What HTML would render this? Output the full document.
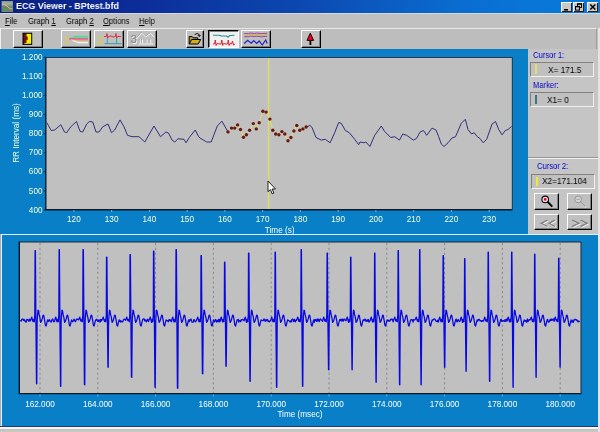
<!DOCTYPE html>
<html><head><meta charset="utf-8"><title>ECG Viewer - BPtest.bfd</title>
<style>
html,body{margin:0;padding:0;}
body{width:600px;height:432px;overflow:hidden;background:#c0c0c0;font-family:"Liberation Sans",sans-serif;font-size:8px;position:relative;}
.abs{position:absolute;}
#title .cap,#menu span,.lab,.box span{will-change:transform}
#title{left:0;top:0;width:600px;height:12.7px;background:linear-gradient(90deg,#0a2080 0%,#0c2c98 22%,#0c48b0 50%,#0a6cd0 76%,#0878d8 92%,#0878d8 100%);}
#title .cap{left:16px;top:1px;color:#fff;font-weight:bold;font-size:9.3px;line-height:11px;white-space:nowrap;transform:scaleX(0.96);transform-origin:0 0}
.tb{top:1.5px;width:11px;height:10px;background:#c8c8c8;box-shadow:inset 1px 1px 0 #fff,inset -1px -1px 0 #202020;}
#menu{left:0;top:13px;width:600px;height:15px;background:#c0c0c0;border-top:1px solid #d8d8d8;box-sizing:border-box}
#menu span{position:absolute;top:1.6px;color:#000;font-size:8.8px;line-height:10px;white-space:nowrap;transform:scaleX(0.87);transform-origin:0 0}
#menu u{text-decoration:underline;text-underline-offset:1px}
#tool{left:0;top:28.4px;width:597px;height:21.1px;background:#bdbdbd;border-top:1px solid #e8e8e8;border-right:1px solid #a0a0a0;border-left:1px solid #f0f0f0;box-sizing:border-box}
.btn{top:30px;height:17.8px;will-change:transform;background:#c0c0c0;box-sizing:border-box;border:1px solid;border-color:#fff #000 #000 #fff;box-shadow:inset -1px -1px 0 #808080;}
.btn.down{border-color:#000 #fff #fff #000;background:#f0f0f0;box-shadow:inset 1px 1px 0 #808080;}
#top{left:0;top:49px;width:600px;height:185px;background:#087fc6;}
#bottom{left:0;top:234px;width:598.3px;height:192px;background:#087fc6;box-sizing:border-box;border-left:1px solid #a4b0bc;box-shadow:inset 1px 1px 0 #e4f2ff}
#side{left:528px;top:49px;width:72px;height:185px;background:#c5c5c5;}
.lab{color:#0000d0;font-size:8.8px;line-height:10px;white-space:nowrap;transform:scaleX(0.865);transform-origin:0 0}
.box{background:#c0c0c0;box-sizing:border-box;border:1px solid;border-color:#808080 #f0f0f0 #f0f0f0 #808080;color:#000;font-size:9px;line-height:12.5px;padding-top:0.9px;white-space:nowrap}
.box span{display:inline-block;transform:scaleX(0.92);transform-origin:0 0}
.sbtn{background:#c0c0c0;box-sizing:border-box;border:1px solid;border-color:#fff #000 #000 #fff;box-shadow:inset -1px -1px 0 #808080;}
svg{position:absolute;left:0;top:0;overflow:visible}
svg text{font-family:"Liberation Sans",sans-serif;}
</style></head><body>

<div id="title" class="abs">
<svg width="14" height="13" viewBox="0 0 14 13"><rect x="1.5" y="1" width="11.5" height="11" fill="#708898"/><rect x="2" y="1.5" width="10.5" height="4" fill="#a0a890"/><rect x="2" y="7" width="10.5" height="4.5" fill="#589060"/><path d="M2 4 L6 5 L9 8 L12.5 9" stroke="#d0c080" stroke-width="1" fill="none"/><path d="M2 7 L5 6.5 L8 9.5 L12.5 10.5" stroke="#c06050" stroke-width="0.8" fill="none"/></svg>
<div class="abs cap">ECG Viewer - BPtest.bfd</div>
<div class="abs tb" style="left:561px"><svg width="11" height="10"><rect x="3" y="7" width="4" height="1.6" fill="#000"/></svg></div>
<div class="abs tb" style="left:573px"><svg width="11" height="10"><rect x="4.5" y="1.8" width="4" height="3.6" fill="none" stroke="#000" stroke-width="1"/><rect x="4" y="1.5" width="5" height="1.2" fill="#000"/><rect x="2.5" y="4.5" width="4" height="3.6" fill="#c8c8c8" stroke="#000" stroke-width="1"/><rect x="2" y="4" width="5" height="1.3" fill="#000"/></svg></div>
<div class="abs tb" style="left:586.7px;width:11.8px"><svg width="12" height="10"><path d="M3.3 2.5 L8.3 7.5 M8.3 2.5 L3.3 7.5" stroke="#000" stroke-width="1.5"/></svg></div>
</div>
<div id="menu" class="abs">
<span style="left:5px"><u>F</u>ile</span>
<span style="left:28px">Graph <u>1</u></span>
<span style="left:65.5px">Graph <u>2</u></span>
<span style="left:103px"><u>O</u>ptions</span>
<span style="left:139px"><u>H</u>elp</span>
</div>
<div id="tool" class="abs"></div>
<div class="abs btn" style="left:12.5px;width:29.5px"><svg width="27.5" height="15" viewBox="13.5 31 27.5 15"><rect x="22" y="32.7" width="9.7" height="12.2" fill="#000"/><rect x="23" y="33.8" width="3.2" height="10" fill="#701010"/><rect x="26" y="33.8" width="4.7" height="10" fill="#f8f000"/><rect x="25.5" y="36.6" width="1.7" height="3.2" fill="#701010"/><rect x="24" y="43" width="3" height="0.9" fill="#f8f000"/></svg></div>
<div class="abs btn" style="left:61.3px;width:30px"><svg width="28" height="15" viewBox="62.3 31 28 15"><text x="63.8" y="43.8" font-size="11.5" fill="#d8d040">1</text><path d="M70 38.4 L76.5 36.3 L88.3 36.3" stroke="#48e060" stroke-width="1" fill="none"/><path d="M72 38.3 L77 37.4 L88.3 37.4" stroke="#50d0d8" stroke-width="0.8" fill="none"/><path d="M69.5 38.7 L88.3 38.7" stroke="#f06048" stroke-width="1.1" fill="none"/><path d="M69.5 39.3 L75 39.9 L88.3 39.9" stroke="#e058e0" stroke-width="1" fill="none"/><path d="M71 39.6 L77 41.2 L88.3 41.2" stroke="#e0d860" stroke-width="1" fill="none"/><path d="M73 40.4 L78.5 42.6 L88.3 42.6" stroke="#f4f4f4" stroke-width="1.1" fill="none"/></svg></div>
<div class="abs btn" style="left:94px;width:30px"><svg width="28" height="15" viewBox="95 31 28 15"><text x="96.8" y="43.6" font-size="11.8" fill="#d8cc38">2</text><path d="M104 36.5 L106.3 36.5 L107 33.5 L107.7 38 L108.5 36.5 L111 36 L113 37 L115.3 36.5 L116 33.5 L116.7 38 L117.5 36.5 L121 36.5" stroke="#e03040" stroke-width="1" fill="none"/><path d="M107.3 38 V43.7 M116.6 38 V43.7 M104.5 43.7 H121.5" stroke="#30a0a8" stroke-width="1" fill="none"/></svg></div>
<div class="abs btn" style="left:126.7px;width:30px"><svg width="28" height="15" viewBox="127.7 31 28 15"><text x="131.1" y="43.9" font-size="10.8" fill="#fff">3</text><text x="130.4" y="43.2" font-size="10.8" fill="#888" stroke="#808080" stroke-width="0.2">3</text><path d="M136.3 39 L141.4 33.1 L145.3 37 L150.4 33.4 L153.4 37 M139.9 39.5 V43.5 M142.2 39.5 V43.5 M146.7 39.5 V43.5 M150.4 39.5 V43.5 M138 43.9 H153" stroke="#a0a0a0" stroke-width="1" fill="none" transform="translate(-0.5,-0.5)"/><path d="M136.3 39 L141.4 33.1 L145.3 37 L150.4 33.4 L153.4 37 M139.9 39.5 V43.5 M142.2 39.5 V43.5 M146.7 39.5 V43.5 M150.4 39.5 V43.5 M138 43.9 H153" stroke="#fff" stroke-width="0.9" fill="none"/></svg></div>
<div class="abs btn" style="left:186.3px;width:17.5px"><svg width="15.5" height="15" viewBox="187.3 31 15.5 15"><path d="M189.5 44 V36.5 H192.5 L193.5 37.8 H198 V39.5" fill="#b89818" stroke="#000" stroke-width="1"/><path d="M189.5 44 L192 39.5 H201 L198.5 44 Z" fill="#d0b020" stroke="#000" stroke-width="1"/><path d="M195 34.5 Q197.5 32.5 199.5 34.5 L199.5 36 M198.3 35.2 L199.6 36.6 L200.8 35" stroke="#000" stroke-width="0.9" fill="none"/></svg></div>
<div class="abs btn down" style="left:207.5px;width:30.5px"><svg width="28.5" height="15" viewBox="208.5 31 28.5 15"><path d="M212.5 35.2 L219 35.2 L220.5 36 L226 36 L227.5 37 L229.5 35.5 L234 35.2" stroke="#209090" stroke-width="1.1" fill="none"/><path d="M212.5 44 L214 44 L214.8 40 L215.6 45.5 L216.5 43.5 L219 44 L220.5 44 L221.3 40 L222.1 45.5 L223 43.5 L225.5 44 L227 44 L227.8 40 L228.6 45.5 L229.5 43.5 L231 44 L232 41 L233 45 L234.5 44" stroke="#e02030" stroke-width="1" fill="none"/></svg></div>
<div class="abs btn" style="left:241.3px;width:30px"><svg width="28" height="15" viewBox="242.3 31 28 15"><path d="M244.5 33.6 L249 33.6 L250.5 33 L255 33.5 L257 33.1 L262 33.6 L267.5 33.2" stroke="#9030a0" stroke-width="0.85" fill="none"/><path d="M244.5 35.1 L249 35.1 L250.5 34.5 L255 35 L257 34.6 L262 35.2 L267.5 34.7" stroke="#e8a828" stroke-width="0.9" fill="none"/><path d="M244.5 36.7 L249 36.7 L250.5 36.1 L255 36.6 L257 36.2 L262 36.8 L267.5 36.3" stroke="#9030a0" stroke-width="0.85" fill="none"/><path d="M244.5 43.5 L248 40.3 L251.5 43.2 L254 40.5 L257 43.5 L259.5 41 L262.5 45 L266 40 L267.5 43.5" stroke="#2020c0" stroke-width="1.2" fill="none"/></svg></div>
<div class="abs btn" style="left:300.8px;width:19.5px"><svg width="17.5" height="15" viewBox="301.8 31 17.5 15"><rect x="309.3" y="39" width="1.8" height="6" fill="#000"/><path d="M310.1 33.2 L313.4 40.4 L306.8 40.4 Z" fill="#f00020" stroke="#200000" stroke-width="1" stroke-linejoin="round"/></svg></div>
<div id="top" class="abs"></div>
<div id="side" class="abs"></div>
<div class="abs lab" style="left:532.8px;top:49.6px">Cursor 1:</div>
<div class="abs box" style="left:530px;top:62px;width:64px;height:15.4px;padding-left:17px"><span>X= 171.5</span></div>
<div class="abs" style="left:534.8px;top:64.4px;width:2.4px;height:9.8px;background:#e2de70"></div>
<div class="abs lab" style="left:532.8px;top:79.6px">Marker:</div>
<div class="abs box" style="left:530px;top:91.8px;width:64px;height:15.4px;padding-left:16px"><span>X1= 0</span></div>
<div class="abs" style="left:535.2px;top:94.5px;width:1.7px;height:9.6px;background:#407484"></div>
<div class="abs" style="left:528px;top:157.5px;width:72px;height:1px;background:#f0f0f0"></div>
<div class="abs" style="left:528px;top:156.5px;width:72px;height:1px;background:#989898"></div>
<div class="abs lab" style="left:537px;top:160.5px">Cursor 2:</div>
<div class="abs box" style="left:531px;top:173.5px;width:63.5px;height:15px;padding-left:10px"><span>X2=171.104</span></div>
<div class="abs" style="left:535.5px;top:176.5px;width:2px;height:9.5px;background:#ecec30"></div>
<div class="abs sbtn" style="left:533.5px;top:193px;width:25.5px;height:16.5px"><svg width="24" height="15" viewBox="0 0 24 15"><circle cx="10.2" cy="5.4" r="3.3" fill="#f8e0e0" stroke="#000" stroke-width="1.1"/><path d="M12.7 7.9 L17.3 12.6" stroke="#000" stroke-width="2"/><circle cx="10.2" cy="5.4" r="1.3" fill="#e00020"/></svg></div>
<div class="abs sbtn" style="left:566.5px;top:193px;width:25.5px;height:16.5px"><svg width="24" height="15" viewBox="0 0 24 15"><circle cx="10.2" cy="5.4" r="3.3" fill="#d4d4d4" stroke="#909090" stroke-width="0.9"/><path d="M12.9 8.3 L17.8 13.2" stroke="#fff" stroke-width="1.6"/><path d="M12.6 7.8 L17.4 12.6" stroke="#909090" stroke-width="1.2"/><path d="M8.4 5.4 H12" stroke="#a0a0a0" stroke-width="0.9"/></svg></div>
<div class="abs sbtn" style="left:533.5px;top:213.5px;width:25.5px;height:16.5px"><svg width="24" height="15" viewBox="0 0 24 15"><path d="M12.5 5.2 L6.3 8.3 L12.5 11.5 M19.9 5.2 L14.2 8.3 L19.9 11.5" stroke="#fff" stroke-width="1.2" fill="none" transform="translate(0.8,0.8)"/><path d="M12.5 5.2 L6.3 8.3 L12.5 11.5 M19.9 5.2 L14.2 8.3 L19.9 11.5" stroke="#808080" stroke-width="1.4" fill="none"/></svg></div>
<div class="abs sbtn" style="left:566.5px;top:213.5px;width:25.5px;height:16.5px"><svg width="24" height="15" viewBox="0 0 24 15"><path d="M4.2 5.2 L10.9 8.3 L4.2 11.5 M12.6 5.2 L19 8.3 L12.6 11.5" stroke="#fff" stroke-width="1.2" fill="none" transform="translate(0.8,0.8)"/><path d="M4.2 5.2 L10.9 8.3 L4.2 11.5 M12.6 5.2 L19 8.3 L12.6 11.5" stroke="#808080" stroke-width="1.4" fill="none"/></svg></div>
<div id="bottom" class="abs"></div>
<div class="abs" style="left:0;top:426px;width:600px;height:0.8px;background:#283860"></div>
<div class="abs" style="left:0;top:426.8px;width:600px;height:2.7px;background:#f6f6f6"></div>
<div class="abs" style="left:0;top:429.5px;width:600px;height:2.5px;background:#c4c8c0"></div>
<div class="abs" style="left:598.3px;top:28px;width:1.7px;height:404px;background:#e4e4e4"></div>
<svg width="600" height="432" viewBox="0 0 600 432">
<rect x="46" y="57.5" width="466" height="152" fill="#c0c0c0"/>
<path d="M45.8 57 V209.8 H512.5" stroke="#101828" stroke-width="1.4" fill="none"/>
<path d="M45.8 57.5 H512.3 V209.8" stroke="#203040" stroke-width="0.9" fill="none"/>
<polyline points="46.7,122.5 51.2,130.5 54.7,130.0 60.8,124.7 64.5,132.0 66.7,132.7 70.7,126.8 76.5,121.5 80.0,131.3 82.7,132.0 86.7,124.0 89.3,121.5 92.8,122.0 96.0,132.0 99.0,132.0 102.7,126.8 108.0,124.0 111.5,132.7 114.7,130.0 120.0,119.9 124.0,126.8 127.5,135.3 132.0,136.7 139.0,136.7 144.8,142.0 154.0,126.0 160.5,136.7 165.9,132.0 168.5,133.0 172.0,140.0 174.7,142.0 178.0,138.8 184.0,139.3 186.0,142.8 189.3,137.5 195.2,130.0 198.7,136.7 200.0,138.0 206.7,142.0 211.2,142.0 217.3,126.0 221.9,121.2 228.0,131.9" fill="none" stroke="#30307c" stroke-width="1"/>
<polyline points="306.1,127.0 309.9,125.5 312.0,127.3 316.0,137.5 321.3,140.1 325.3,139.3 330.1,142.8 334.7,132.7 338.7,122.5 341.3,123.3 345.3,130.5 349.3,132.7 354.7,139.3 358.7,144.7 360.0,142.0 364.0,142.8 365.9,142.0 369.9,146.5 374.7,135.3 381.3,126.0 384.5,131.3 390.7,137.5 394.7,136.7 399.5,140.1 402.7,134.0 406.7,135.3 413.3,140.1 416.5,138.5 420.0,132.1 423.5,130.5 426.7,135.3 432.0,128.1 436.0,130.0 438.7,136.7 441.3,144.1 444.0,146.5 448.0,142.8 452.0,138.0 455.5,136.7 461.3,123.3 465.3,119.3 468.0,129.5 471.5,134.0 474.1,132.7 477.3,136.7 480.0,138.5 483.2,142.8 486.7,139.3 492.0,124.1 495.5,121.5 498.7,129.5 502.1,134.8 505.3,130.5 508.0,129.5 511.5,126.5" fill="none" stroke="#30307c" stroke-width="1"/>
<polyline points="228.0,131.9 231.5,128.1 234.7,128.1 237.6,124.9 240.5,129.5 243.5,137.2 246.4,134.8 249.6,130.3 253.3,123.6 256.3,128.9 259.2,122.8 262.9,111.3 266.1,112.1 269.9,119.1 272.8,130.3 275.7,134.0 278.9,134.8 281.9,131.6 284.8,134.0 288.0,140.7 290.9,137.5 293.9,131.0 296.8,125.5 299.7,130.3 302.9,128.9 306.1,127.0" fill="none" stroke="#e4e068" stroke-width="0.9"/>
<line x1="268.6" y1="58" x2="268.6" y2="209" stroke="#dcdc68" stroke-width="1.4"/>
<circle cx="228.0" cy="131.9" r="1.7" fill="#681810"/>
<circle cx="231.5" cy="128.1" r="1.7" fill="#681810"/>
<circle cx="234.7" cy="128.1" r="1.7" fill="#681810"/>
<circle cx="237.6" cy="124.9" r="1.7" fill="#681810"/>
<circle cx="240.5" cy="129.5" r="1.7" fill="#681810"/>
<circle cx="243.5" cy="137.2" r="1.7" fill="#681810"/>
<circle cx="246.4" cy="134.8" r="1.7" fill="#681810"/>
<circle cx="249.6" cy="130.3" r="1.7" fill="#681810"/>
<circle cx="253.3" cy="123.6" r="1.7" fill="#681810"/>
<circle cx="256.3" cy="128.9" r="1.7" fill="#681810"/>
<circle cx="259.2" cy="122.8" r="1.7" fill="#681810"/>
<circle cx="262.9" cy="111.3" r="1.7" fill="#681810"/>
<circle cx="266.1" cy="112.1" r="1.7" fill="#681810"/>
<circle cx="269.9" cy="119.1" r="1.7" fill="#681810"/>
<circle cx="272.8" cy="130.3" r="1.7" fill="#681810"/>
<circle cx="275.7" cy="134.0" r="1.7" fill="#681810"/>
<circle cx="278.9" cy="134.8" r="1.7" fill="#681810"/>
<circle cx="281.9" cy="131.6" r="1.7" fill="#681810"/>
<circle cx="284.8" cy="134.0" r="1.7" fill="#681810"/>
<circle cx="288.0" cy="140.7" r="1.7" fill="#681810"/>
<circle cx="290.9" cy="137.5" r="1.7" fill="#681810"/>
<circle cx="293.9" cy="131.0" r="1.7" fill="#681810"/>
<circle cx="296.8" cy="125.5" r="1.7" fill="#681810"/>
<circle cx="299.7" cy="130.3" r="1.7" fill="#681810"/>
<circle cx="302.9" cy="128.9" r="1.7" fill="#681810"/>
<circle cx="306.1" cy="127.0" r="1.7" fill="#681810"/>
<text x="42.5" y="59.8" font-size="8.2" fill="#f4ffdc" text-anchor="end">1.200</text>
<line x1="43.5" y1="57.3" x2="45.5" y2="57.3" stroke="#102030" stroke-width="0.8"/>
<text x="42.5" y="78.9" font-size="8.2" fill="#f4ffdc" text-anchor="end">1.100</text>
<line x1="43.5" y1="76.4" x2="45.5" y2="76.4" stroke="#102030" stroke-width="0.8"/>
<text x="42.5" y="98.0" font-size="8.2" fill="#f4ffdc" text-anchor="end">1.000</text>
<line x1="43.5" y1="95.5" x2="45.5" y2="95.5" stroke="#102030" stroke-width="0.8"/>
<text x="42.5" y="117.1" font-size="8.2" fill="#f4ffdc" text-anchor="end">900</text>
<line x1="43.5" y1="114.6" x2="45.5" y2="114.6" stroke="#102030" stroke-width="0.8"/>
<text x="42.5" y="136.2" font-size="8.2" fill="#f4ffdc" text-anchor="end">800</text>
<line x1="43.5" y1="133.7" x2="45.5" y2="133.7" stroke="#102030" stroke-width="0.8"/>
<text x="42.5" y="155.3" font-size="8.2" fill="#f4ffdc" text-anchor="end">700</text>
<line x1="43.5" y1="152.8" x2="45.5" y2="152.8" stroke="#102030" stroke-width="0.8"/>
<text x="42.5" y="174.4" font-size="8.2" fill="#f4ffdc" text-anchor="end">600</text>
<line x1="43.5" y1="171.8" x2="45.5" y2="171.8" stroke="#102030" stroke-width="0.8"/>
<text x="42.5" y="193.5" font-size="8.2" fill="#f4ffdc" text-anchor="end">500</text>
<line x1="43.5" y1="190.9" x2="45.5" y2="190.9" stroke="#102030" stroke-width="0.8"/>
<text x="42.5" y="212.6" font-size="8.2" fill="#f4ffdc" text-anchor="end">400</text>
<line x1="43.5" y1="210.0" x2="45.5" y2="210.0" stroke="#102030" stroke-width="0.8"/>
<text x="73.9" y="221.5" font-size="8.2" fill="#f4ffdc" text-anchor="middle">120</text>
<line x1="73.9" y1="210" x2="73.9" y2="212" stroke="#7fc0e4" stroke-width="0.8"/>
<text x="111.65" y="221.5" font-size="8.2" fill="#f4ffdc" text-anchor="middle">130</text>
<line x1="111.65" y1="210" x2="111.65" y2="212" stroke="#7fc0e4" stroke-width="0.8"/>
<text x="149.4" y="221.5" font-size="8.2" fill="#f4ffdc" text-anchor="middle">140</text>
<line x1="149.4" y1="210" x2="149.4" y2="212" stroke="#7fc0e4" stroke-width="0.8"/>
<text x="187.15" y="221.5" font-size="8.2" fill="#f4ffdc" text-anchor="middle">150</text>
<line x1="187.15" y1="210" x2="187.15" y2="212" stroke="#7fc0e4" stroke-width="0.8"/>
<text x="224.9" y="221.5" font-size="8.2" fill="#f4ffdc" text-anchor="middle">160</text>
<line x1="224.9" y1="210" x2="224.9" y2="212" stroke="#7fc0e4" stroke-width="0.8"/>
<text x="262.65" y="221.5" font-size="8.2" fill="#f4ffdc" text-anchor="middle">170</text>
<line x1="262.65" y1="210" x2="262.65" y2="212" stroke="#7fc0e4" stroke-width="0.8"/>
<text x="300.4" y="221.5" font-size="8.2" fill="#f4ffdc" text-anchor="middle">180</text>
<line x1="300.4" y1="210" x2="300.4" y2="212" stroke="#7fc0e4" stroke-width="0.8"/>
<text x="338.15" y="221.5" font-size="8.2" fill="#f4ffdc" text-anchor="middle">190</text>
<line x1="338.15" y1="210" x2="338.15" y2="212" stroke="#7fc0e4" stroke-width="0.8"/>
<text x="375.9" y="221.5" font-size="8.2" fill="#f4ffdc" text-anchor="middle">200</text>
<line x1="375.9" y1="210" x2="375.9" y2="212" stroke="#7fc0e4" stroke-width="0.8"/>
<text x="413.65" y="221.5" font-size="8.2" fill="#f4ffdc" text-anchor="middle">210</text>
<line x1="413.65" y1="210" x2="413.65" y2="212" stroke="#7fc0e4" stroke-width="0.8"/>
<text x="451.4" y="221.5" font-size="8.2" fill="#f4ffdc" text-anchor="middle">220</text>
<line x1="451.4" y1="210" x2="451.4" y2="212" stroke="#7fc0e4" stroke-width="0.8"/>
<text x="489.15" y="221.5" font-size="8.2" fill="#f4ffdc" text-anchor="middle">230</text>
<line x1="489.15" y1="210" x2="489.15" y2="212" stroke="#7fc0e4" stroke-width="0.8"/>
<text x="279.7" y="232.7" font-size="8.2" fill="#f8fff0" text-anchor="middle">Time (s)</text>
<text transform="translate(19,133) rotate(-90)" font-size="8.2" fill="#f4ffdc" text-anchor="middle">RR Interval (ms)</text>
<path d="M268 181 V191.7 L270.4 189.6 L272.2 193.8 L273.9 193.1 L272.1 189 L275.5 189 Z" fill="#fff" stroke="#000" stroke-width="0.85"/>
<rect x="19.5" y="242" width="561.5" height="151.5" fill="#c0c0c0"/>
<line x1="40.0" y1="243" x2="40.0" y2="393" stroke="#888890" stroke-width="1" stroke-dasharray="2.2,2.6"/>
<line x1="97.8" y1="243" x2="97.8" y2="393" stroke="#888890" stroke-width="1" stroke-dasharray="2.2,2.6"/>
<line x1="155.6" y1="243" x2="155.6" y2="393" stroke="#888890" stroke-width="1" stroke-dasharray="2.2,2.6"/>
<line x1="213.4" y1="243" x2="213.4" y2="393" stroke="#888890" stroke-width="1" stroke-dasharray="2.2,2.6"/>
<line x1="271.2" y1="243" x2="271.2" y2="393" stroke="#888890" stroke-width="1" stroke-dasharray="2.2,2.6"/>
<line x1="329.0" y1="243" x2="329.0" y2="393" stroke="#888890" stroke-width="1" stroke-dasharray="2.2,2.6"/>
<line x1="386.8" y1="243" x2="386.8" y2="393" stroke="#888890" stroke-width="1" stroke-dasharray="2.2,2.6"/>
<line x1="444.6" y1="243" x2="444.6" y2="393" stroke="#888890" stroke-width="1" stroke-dasharray="2.2,2.6"/>
<line x1="502.4" y1="243" x2="502.4" y2="393" stroke="#888890" stroke-width="1" stroke-dasharray="2.2,2.6"/>
<line x1="560.2" y1="243" x2="560.2" y2="393" stroke="#888890" stroke-width="1" stroke-dasharray="2.2,2.6"/>
<polyline points="20.5,320.0 21.0,321.1 21.4,320.7 21.9,319.1 22.5,319.0 23.0,319.1 23.5,320.3 24.2,319.3 24.6,321.0 25.4,320.9 25.9,322.2 26.3,321.8 26.8,319.4 27.3,319.9 27.9,319.5 28.6,321.1 29.1,320.8 29.5,319.1 30.0,321.2 30.6,320.2 31.2,318.6 31.8,317.1 32.4,319.6 33.0,321.7 33.7,319.4 34.3,321.8 34.8,314.6 35.1,250.5 35.4,250.5 35.9,320.6 36.5,383.5 36.8,383.8 37.1,322.6 37.5,315.6 38.0,310.1 38.5,310.6 39.1,314.6 39.8,317.1 40.6,322.4 41.5,321.1 42.4,318.1 43.1,315.1 43.8,315.6 44.6,320.1 45.4,325.1 46.1,326.1 46.9,322.6 47.6,319.8 48.2,320.4 48.7,321.6 49.3,319.7 50.0,320.7 50.7,321.4 51.2,322.2 51.6,320.3 52.3,319.4 52.8,319.0 53.5,321.5 54.1,321.9 54.6,321.0 55.2,318.6 55.8,317.1 56.4,319.6 57.0,321.8 57.7,319.4 58.3,321.8 58.8,314.6 59.1,249.5 59.4,249.5 59.9,320.6 60.5,386.0 60.8,386.3 61.1,322.6 61.5,315.6 62.0,310.1 62.5,310.6 63.1,314.6 63.8,317.1 64.6,322.4 65.5,321.1 66.4,318.1 67.1,315.1 67.8,315.6 68.6,320.1 69.4,325.1 70.1,326.1 70.9,322.6 71.6,319.8 72.2,320.9 72.8,321.8 73.5,320.5 74.1,319.1 74.8,321.1 75.5,321.7 76.0,320.2 76.6,319.0 77.2,319.5 77.7,319.1 78.6,319.8 79.2,318.6 79.8,317.1 80.4,319.6 81.0,321.2 81.7,319.4 82.3,321.8 82.8,314.6 83.0,249.5 83.4,249.5 83.9,320.6 84.4,384.5 84.8,384.8 85.1,322.6 85.5,315.6 86.0,310.1 86.5,310.6 87.1,314.6 87.8,317.1 88.6,322.4 89.5,321.1 90.4,318.1 91.1,315.1 91.8,315.6 92.6,320.1 93.4,325.1 94.1,326.1 94.9,322.6 95.6,319.8 96.2,320.2 96.9,319.2 97.5,320.8 98.2,321.7 98.9,319.8 99.4,320.1 100.1,322.2 100.6,319.5 101.1,319.7 101.6,320.9 102.1,319.6 102.7,318.6 103.3,317.1 103.9,319.6 104.5,321.5 105.2,319.4 105.8,321.8 106.3,314.6 106.5,257.0 106.9,257.0 107.4,320.6 107.9,367.0 108.2,367.3 108.6,322.6 109.0,315.6 109.5,310.1 110.0,310.6 110.6,314.6 111.3,317.1 112.1,322.4 113.0,321.1 113.9,318.1 114.6,315.1 115.3,315.6 116.1,320.1 116.9,325.1 117.6,326.1 118.4,322.6 119.1,319.8 119.7,320.2 120.3,322.1 120.9,320.7 121.6,321.2 122.0,322.0 122.6,321.9 123.3,320.2 123.9,319.3 124.5,319.1 124.9,319.6 125.6,320.3 126.2,318.6 126.8,317.1 127.4,319.6 128.0,320.8 128.7,319.4 129.3,321.8 129.8,314.6 130.0,254.5 130.4,254.5 130.9,320.6 131.4,377.0 131.8,377.3 132.2,322.6 132.5,315.6 133.0,310.1 133.5,310.6 134.1,314.6 134.8,317.1 135.6,322.4 136.5,321.1 137.4,318.1 138.1,315.1 138.8,315.6 139.6,320.1 140.4,325.1 141.1,326.1 141.9,322.6 142.6,319.8 143.2,318.9 143.7,319.2 144.2,319.0 144.9,321.0 145.3,319.8 145.9,320.1 146.3,321.8 147.1,320.5 147.6,319.2 148.1,320.1 148.5,321.7 149.1,319.6 149.7,318.6 150.3,317.1 150.9,319.6 151.5,322.4 152.2,319.4 152.8,321.8 153.3,314.6 153.5,251.0 153.9,251.0 154.4,320.6 154.9,387.0 155.2,387.3 155.7,322.6 156.0,315.6 156.5,310.1 157.0,310.6 157.6,314.6 158.3,317.1 159.1,322.4 160.0,321.1 160.9,318.1 161.6,315.1 162.3,315.6 163.1,320.1 163.9,325.1 164.6,326.1 165.4,322.6 166.1,319.8 166.7,320.7 167.2,320.7 167.6,320.7 168.3,321.8 168.9,319.8 169.5,319.5 170.1,320.7 170.8,320.0 171.3,321.7 171.6,321.3 172.2,318.6 172.8,317.1 173.4,319.6 174.0,322.1 174.7,319.4 175.3,321.8 175.8,314.6 176.0,249.5 176.4,249.5 176.9,320.6 177.4,388.0 177.8,388.3 178.2,322.6 178.5,315.6 179.0,310.1 179.5,310.6 180.1,314.6 180.8,317.1 181.6,322.4 182.5,321.1 183.4,318.1 184.1,315.1 184.8,315.6 185.6,320.1 186.4,325.1 187.1,326.1 187.9,322.6 188.6,319.8 189.2,321.7 189.9,319.7 190.4,320.1 190.9,319.0 191.3,319.8 192.0,322.2 192.5,322.1 193.3,322.1 193.8,319.6 194.3,319.6 194.8,321.0 195.5,321.8 196.1,321.1 196.6,319.8 197.2,318.6 197.8,317.1 198.4,319.6 199.0,321.9 199.7,319.4 200.3,321.8 200.8,314.6 201.0,255.5 201.4,255.5 201.9,320.6 202.4,373.5 202.8,373.8 203.2,322.6 203.5,315.6 204.0,310.1 204.5,310.6 205.1,314.6 205.8,317.1 206.6,322.4 207.5,321.1 208.4,318.1 209.1,315.1 209.8,315.6 210.6,320.1 211.4,325.1 212.1,326.1 212.9,322.6 213.6,319.8 214.2,322.0 214.9,321.5 215.4,319.5 216.1,320.0 216.8,322.2 217.3,320.3 218.1,321.4 218.5,319.3 219.0,322.0 219.7,319.4 220.1,321.6 220.7,318.6 221.3,317.1 221.9,319.6 222.5,321.9 223.2,319.4 223.8,321.8 224.3,314.6 224.5,262.0 224.9,262.0 225.4,320.6 225.9,366.0 226.2,366.3 226.7,322.6 227.0,315.6 227.5,310.1 228.0,310.6 228.6,314.6 229.3,317.1 230.1,322.4 231.0,321.1 231.9,318.1 232.6,315.1 233.3,315.6 234.1,320.1 234.9,325.1 235.6,326.1 236.4,322.6 237.1,319.8 237.7,320.1 238.3,319.3 238.7,322.2 239.3,320.7 240.1,320.4 240.8,321.7 241.2,319.8 241.7,319.7 242.3,319.8 242.9,319.3 243.6,320.1 244.1,320.8 244.7,318.6 245.3,317.1 245.9,319.6 246.5,322.3 247.2,319.4 247.8,321.8 248.3,314.6 248.5,253.0 248.9,253.0 249.4,320.6 249.9,381.0 250.2,381.3 250.7,322.6 251.0,315.6 251.5,310.1 252.0,310.6 252.6,314.6 253.3,317.1 254.1,322.4 255.0,321.1 255.9,318.1 256.6,315.1 257.3,315.6 258.1,320.1 258.9,325.1 259.6,326.1 260.4,322.6 261.1,319.8 261.7,320.3 262.4,320.6 263.0,320.7 263.4,320.4 263.9,318.9 264.6,319.5 265.1,321.4 265.7,320.0 266.3,320.8 267.0,319.3 267.6,319.7 268.1,321.5 268.6,320.8 269.3,322.0 269.9,321.0 270.6,320.6 271.2,318.6 271.8,317.1 272.4,319.6 273.0,321.9 273.7,319.4 274.3,321.8 274.8,314.6 275.1,252.0 275.4,252.0 275.9,320.6 276.5,387.0 276.8,387.3 277.2,322.6 277.5,315.6 278.0,310.1 278.5,310.6 279.1,314.6 279.8,317.1 280.6,322.4 281.5,321.1 282.4,318.1 283.1,315.1 283.8,315.6 284.6,320.1 285.4,325.1 286.1,326.1 286.9,322.6 287.6,319.8 288.2,320.4 288.8,320.5 289.5,321.3 290.2,322.1 290.7,320.8 291.4,321.8 291.9,319.3 292.4,319.1 292.9,319.1 293.6,321.6 294.3,319.4 294.9,321.1 295.4,321.9 296.1,319.6 296.6,320.4 297.2,318.6 297.8,317.1 298.4,319.6 299.0,321.6 299.7,319.4 300.3,321.8 300.8,314.6 301.1,249.5 301.4,249.5 301.9,320.6 302.5,386.0 302.8,386.3 303.2,322.6 303.5,315.6 304.0,310.1 304.5,310.6 305.1,314.6 305.8,317.1 306.6,322.4 307.5,321.1 308.4,318.1 309.1,315.1 309.8,315.6 310.6,320.1 311.4,325.1 312.1,326.1 312.9,322.6 313.6,319.8 314.2,322.3 314.9,319.4 315.4,320.7 316.0,319.6 316.5,321.4 316.9,320.8 317.4,319.0 317.9,321.0 318.5,319.1 319.3,321.6 320.0,319.3 320.5,319.0 321.2,319.8 321.6,320.3 322.6,321.3 323.2,318.6 323.8,317.1 324.4,319.6 325.0,321.2 325.7,319.4 326.3,321.8 326.8,314.6 327.1,253.0 327.4,253.0 327.9,320.6 328.5,369.5 328.8,369.8 329.2,322.6 329.5,315.6 330.0,310.1 330.5,310.6 331.1,314.6 331.8,317.1 332.6,322.4 333.5,321.1 334.4,318.1 335.1,315.1 335.8,315.6 336.6,320.1 337.4,325.1 338.1,326.1 338.9,322.6 339.6,319.8 340.2,319.4 340.9,320.8 341.6,319.2 342.0,321.2 342.5,319.1 343.3,321.1 343.9,319.2 344.6,319.1 345.3,320.4 346.1,320.7 346.7,318.6 347.3,317.1 347.9,319.6 348.5,322.3 349.2,319.4 349.8,321.8 350.3,314.6 350.6,257.0 350.9,257.0 351.4,320.6 352.0,369.5 352.2,369.8 352.7,322.6 353.0,315.6 353.5,310.1 354.0,310.6 354.6,314.6 355.3,317.1 356.1,322.4 357.0,321.1 357.9,318.1 358.6,315.1 359.3,315.6 360.1,320.1 360.9,325.1 361.6,326.1 362.4,322.6 363.1,319.8 363.7,319.8 364.1,320.7 364.6,319.3 365.1,319.1 365.6,320.0 366.1,321.5 366.6,320.6 367.0,320.1 367.4,319.8 367.8,321.4 368.4,319.5 369.0,322.1 369.4,321.7 370.1,320.6 370.7,318.6 371.3,317.1 371.9,319.6 372.5,322.2 373.2,319.4 373.8,321.8 374.3,314.6 374.6,253.0 374.9,253.0 375.4,320.6 376.0,382.0 376.2,382.3 376.7,322.6 377.0,315.6 377.5,310.1 378.0,310.6 378.6,314.6 379.3,317.1 380.1,322.4 381.0,321.1 381.9,318.1 382.6,315.1 383.3,315.6 384.1,320.1 384.9,325.1 385.6,326.1 386.4,322.6 387.1,319.8 387.7,320.2 388.3,321.2 389.0,320.1 389.7,321.3 390.3,320.3 390.9,319.1 391.3,319.1 392.0,319.8 392.4,319.2 393.1,321.9 393.6,320.2 394.2,318.6 394.8,317.1 395.4,319.6 396.0,321.2 396.7,319.4 397.3,321.8 397.8,314.6 398.1,250.5 398.4,250.5 398.9,320.6 399.5,384.5 399.8,384.8 400.2,322.6 400.5,315.6 401.0,310.1 401.5,310.6 402.1,314.6 402.8,317.1 403.6,322.4 404.5,321.1 405.4,318.1 406.1,315.1 406.8,315.6 407.6,320.1 408.4,325.1 409.1,326.1 409.9,322.6 410.6,319.8 411.2,319.9 411.8,319.4 412.3,319.8 413.1,322.2 413.6,319.7 414.4,320.0 415.1,319.6 415.7,318.6 416.3,317.1 416.9,319.6 417.5,321.4 418.2,319.4 418.8,321.8 419.3,314.6 419.6,249.5 419.9,249.5 420.4,320.6 421.0,384.5 421.2,384.8 421.7,322.6 422.0,315.6 422.5,310.1 423.0,310.6 423.6,314.6 424.3,317.1 425.1,322.4 426.0,321.1 426.9,318.1 427.6,315.1 428.3,315.6 429.1,320.1 429.9,325.1 430.6,326.1 431.4,322.6 432.1,319.8 432.7,320.5 433.3,319.6 433.9,318.9 434.3,319.2 434.9,319.0 435.3,319.9 435.8,320.9 436.4,321.5 437.0,321.3 437.7,320.2 438.2,322.2 438.6,321.1 439.2,318.6 439.8,317.1 440.4,319.6 441.0,321.8 441.7,319.4 442.3,321.8 442.8,314.6 443.1,255.5 443.4,255.5 443.9,320.6 444.5,367.0 444.8,367.3 445.2,322.6 445.5,315.6 446.0,310.1 446.5,310.6 447.1,314.6 447.8,317.1 448.6,322.4 449.5,321.1 450.4,318.1 451.1,315.1 451.8,315.6 452.6,320.1 453.4,325.1 454.1,326.1 454.9,322.6 455.6,319.8 456.2,319.0 456.9,321.9 457.5,321.4 458.2,319.4 458.8,320.6 459.5,321.6 460.1,320.8 460.7,318.6 461.3,317.1 461.9,319.6 462.5,322.3 463.2,319.4 463.8,321.8 464.3,314.6 464.6,258.5 464.9,258.5 465.4,320.6 466.0,371.0 466.2,371.3 466.7,322.6 467.0,315.6 467.5,310.1 468.0,310.6 468.6,314.6 469.3,317.1 470.1,322.4 471.0,321.1 471.9,318.1 472.6,315.1 473.3,315.6 474.1,320.1 474.9,325.1 475.6,326.1 476.4,322.6 477.1,319.8 477.7,321.2 478.3,319.7 478.8,319.4 479.3,319.3 480.0,320.8 480.6,321.0 481.2,320.6 481.6,321.6 482.3,320.6 482.9,321.1 483.6,321.1 484.2,318.6 484.8,317.1 485.4,319.6 486.0,321.2 486.7,319.4 487.3,321.8 487.8,314.6 488.1,252.0 488.4,252.0 488.9,320.6 489.5,381.0 489.8,381.3 490.2,322.6 490.5,315.6 491.0,310.1 491.5,310.6 492.1,314.6 492.8,317.1 493.6,322.4 494.5,321.1 495.4,318.1 496.1,315.1 496.8,315.6 497.6,320.1 498.4,325.1 499.1,326.1 499.9,322.6 500.6,319.8 501.2,319.2 501.7,321.4 502.2,321.4 502.9,320.6 503.4,320.5 504.1,321.5 504.7,321.1 505.1,319.4 505.6,321.4 506.1,320.8 506.5,319.1 507.1,321.0 507.7,318.6 508.3,317.1 508.9,319.6 509.5,321.9 510.2,319.4 510.8,321.8 511.3,314.6 511.6,252.0 511.9,252.0 512.4,320.6 513.0,387.0 513.2,387.3 513.6,322.6 514.0,315.6 514.5,310.1 515.0,310.6 515.6,314.6 516.3,317.1 517.1,322.4 518.0,321.1 518.9,318.1 519.6,315.1 520.3,315.6 521.1,320.1 521.9,325.1 522.6,326.1 523.4,322.6 524.1,319.8 524.7,321.2 525.2,320.7 525.8,320.5 526.2,321.9 526.7,322.2 527.4,319.0 528.0,321.7 528.7,320.4 529.2,319.6 530.1,320.0 530.7,318.6 531.3,317.1 531.9,319.6 532.5,321.7 533.2,319.4 533.8,321.8 534.3,314.6 534.6,254.0 534.9,254.0 535.4,320.6 536.0,377.0 536.2,377.3 536.6,322.6 537.0,315.6 537.5,310.1 538.0,310.6 538.6,314.6 539.3,317.1 540.1,322.4 541.0,321.1 541.9,318.1 542.6,315.1 543.3,315.6 544.1,320.1 544.9,325.1 545.6,326.1 546.4,322.6 547.1,319.8 547.7,319.4 548.3,322.1 548.7,321.7 549.3,321.9 550.0,319.7 550.7,320.6 551.1,318.9 551.6,320.4 552.2,319.4 552.7,320.0 553.4,318.9 554.1,321.3 554.7,318.6 555.3,317.1 555.9,319.6 556.5,321.0 557.2,319.4 557.8,321.8 558.3,314.6 558.6,258.0 558.9,258.0 559.4,320.6 560.0,367.0 560.2,367.3 560.6,322.6 561.0,315.6 561.5,310.1 562.0,310.6 562.6,314.6 563.3,317.1 564.1,322.4 565.0,321.1 565.9,318.1 566.6,315.1 567.3,315.6 568.1,320.1 568.9,325.1 569.6,326.1 570.4,322.6 571.1,319.8 571.7,322.0 572.3,322.0 572.9,320.2 573.4,322.3 574.0,320.1 574.5,319.8 575.0,319.2 575.7,319.9 576.4,319.7 576.9,320.6 577.3,320.2 578.1,321.9 578.8,321.0 579.5,322.1" fill="none" stroke="#0808e0" stroke-width="1.25" stroke-linejoin="round"/>
<path d="M19.3 241.5 V393.6 H581.5" stroke="#101828" stroke-width="1.4" fill="none"/>
<path d="M19.3 242 H581 V393.6" stroke="#182838" stroke-width="1" fill="none"/>
<text x="40.0" y="406.5" font-size="8.2" fill="#fff" text-anchor="middle">162.000</text>
<line x1="40.0" y1="394.5" x2="40.0" y2="396.5" stroke="#7fc0e4" stroke-width="0.8"/>
<text x="97.8" y="406.5" font-size="8.2" fill="#fff" text-anchor="middle">164.000</text>
<line x1="97.8" y1="394.5" x2="97.8" y2="396.5" stroke="#7fc0e4" stroke-width="0.8"/>
<text x="155.6" y="406.5" font-size="8.2" fill="#fff" text-anchor="middle">166.000</text>
<line x1="155.6" y1="394.5" x2="155.6" y2="396.5" stroke="#7fc0e4" stroke-width="0.8"/>
<text x="213.4" y="406.5" font-size="8.2" fill="#fff" text-anchor="middle">168.000</text>
<line x1="213.4" y1="394.5" x2="213.4" y2="396.5" stroke="#7fc0e4" stroke-width="0.8"/>
<text x="271.2" y="406.5" font-size="8.2" fill="#fff" text-anchor="middle">170.000</text>
<line x1="271.2" y1="394.5" x2="271.2" y2="396.5" stroke="#7fc0e4" stroke-width="0.8"/>
<text x="329.0" y="406.5" font-size="8.2" fill="#fff" text-anchor="middle">172.000</text>
<line x1="329.0" y1="394.5" x2="329.0" y2="396.5" stroke="#7fc0e4" stroke-width="0.8"/>
<text x="386.8" y="406.5" font-size="8.2" fill="#fff" text-anchor="middle">174.000</text>
<line x1="386.8" y1="394.5" x2="386.8" y2="396.5" stroke="#7fc0e4" stroke-width="0.8"/>
<text x="444.6" y="406.5" font-size="8.2" fill="#fff" text-anchor="middle">176.000</text>
<line x1="444.6" y1="394.5" x2="444.6" y2="396.5" stroke="#7fc0e4" stroke-width="0.8"/>
<text x="502.4" y="406.5" font-size="8.2" fill="#fff" text-anchor="middle">178.000</text>
<line x1="502.4" y1="394.5" x2="502.4" y2="396.5" stroke="#7fc0e4" stroke-width="0.8"/>
<text x="560.2" y="406.5" font-size="8.2" fill="#fff" text-anchor="middle">180.000</text>
<line x1="560.2" y1="394.5" x2="560.2" y2="396.5" stroke="#7fc0e4" stroke-width="0.8"/>
<text x="300" y="417" font-size="8.2" fill="#fff" text-anchor="middle">Time (msec)</text>
</svg>
</body></html>
